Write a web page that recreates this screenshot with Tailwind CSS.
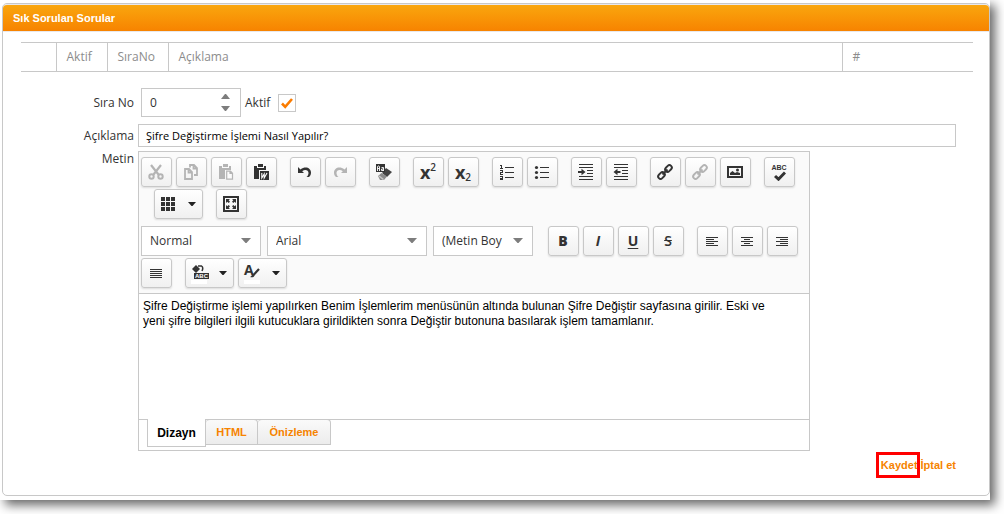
<!DOCTYPE html>
<html lang="tr">
<head>
<meta charset="utf-8">
<title>Sık Sorulan Sorular</title>
<script src="https://cdn.jsdelivr.net/npm/@tailwindcss/browser@4"></script>
</head>
<body class="min-h-screen bg-white pr-[14px] pb-[14px] font-['Open_Sans','Noto_Sans',sans-serif] text-xs text-[#333]">
<main class="bg-white pt-[3px] pb-1 pl-0.5 shadow-[5px_5px_10px_rgba(0,0,0,0.6)]">
<section class="rounded-[5px] border border-[#c8c8c8]">
  <h1 class="flex h-7 items-center rounded-t border-y border-[#e8e8ec] bg-linear-to-b from-[#f9a60e] to-[#f78300] px-[10px] font-['Liberation_Sans',sans-serif] text-[11px] font-bold text-white">Sık Sorulan Sorular</h1>

  <div class="px-[18px] pt-[10px] pr-4 pb-[22px]">
    <table class="w-full table-fixed border-y border-[#c8c8c8] text-left text-[#8c8c8c]">
      <colgroup><col class="w-[35px]"><col class="w-[51px]"><col class="w-[61px]"><col><col class="w-[131px]"></colgroup>
      <thead><tr class="h-[29px]">
        <td></td>
        <th class="border-l border-[#c8c8c8] pl-[10px] font-normal">Aktif</th>
        <th class="border-l border-[#c8c8c8] pl-[10px] font-normal">SıraNo</th>
        <th class="border-l border-[#c8c8c8] pl-[10px] font-normal">Açıklama</th>
        <th class="border-l border-[#c8c8c8] pl-[10px] font-normal">#</th>
      </tr></thead>
    </table>

    <form class="mt-4 mr-[17px] grid grid-cols-[113px_minmax(0,1fr)] gap-x-1">
      <label for="order" class="self-center text-right">Sıra No</label>
      <div class="flex items-center gap-1 pl-[3px]">
        <div class="flex h-[29px] w-[100px] items-center border border-[#c8c8c8] pr-[9px]">
          <input id="order" type="text" inputmode="numeric" value="0" class="w-full min-w-0 flex-1 pl-2 outline-none">
          <div class="flex flex-col gap-[7px]">
            <button type="button" aria-label="Artır" class="block"><svg class="h-[5px] w-[11px]" viewBox="0 0 11 5"><path d="M5 0h1l4 5H1z" fill="#7d7d7d"/></svg></button>
            <button type="button" aria-label="Azalt" class="block"><svg class="h-[5px] w-[11px]" viewBox="0 0 11 5"><path d="M1 0h9L6 5H5z" fill="#7d7d7d"/></svg></button>
          </div>
        </div>
        <label for="active">Aktif</label>
        <div class="relative ml-1 size-[18px]">
          <input id="active" type="checkbox" checked class="peer block size-[18px] appearance-none border border-[#c8c8c8] bg-white">
          <svg class="pointer-events-none absolute inset-0 hidden size-[18px] peer-checked:block" viewBox="0 0 18 18"><path d="M4 9.5l3.2 3.300L14 5" fill="none" stroke="#fb7c00" stroke-width="2.600"/></svg>
        </div>
      </div>

      <label for="title" class="mt-[7px] self-center text-right">Açıklama</label>
      <input id="title" type="text" value="Şifre Değiştirme İşlemi Nasıl Yapılır?" class="mt-[7px] h-[23px] w-full border border-[#c8c8c8] px-[7px] text-[11px] text-black outline-none">

      <span id="text-label" class="mt-1 text-right">Metin</span>
      <div class="mt-1 w-[672px] max-w-full border border-[#c8c8c8]" aria-labelledby="text-label" role="group">
        <div class="flex flex-col border-b border-[#c8c8c8] bg-[#fafafa] px-0.5 pt-[5px] pb-[5px] text-[#333] [&_button]:flex [&_button]:h-[30px] [&_button]:items-center [&_button]:justify-center [&_button]:rounded-[3px] [&_button]:border [&_button]:border-[#c8c8c8] [&_button]:bg-linear-to-b [&_button]:from-white [&_button]:to-[#f0f0f0] [&_button]:pr-px [&_button]:shadow-[0_1px_2px_rgba(0,0,0,0.12)] [&_svg]:shrink-0">
          <div class="flex gap-[13px]">
            <div class="flex gap-1">
              <button type="button" disabled aria-label="Kes" class="w-[31px] text-[#b4b4b4]"><svg class="size-4" viewBox="0 0 16 16" fill="none" stroke="currentColor"><path d="M3 1l7.500 9.500M13 1L5.500 10.500" stroke-width="2.200"/><circle cx="3.500" cy="12.500" r="2.200" stroke-width="2"/><circle cx="12.500" cy="12.500" r="2.200" stroke-width="2"/></svg></button>
              <button type="button" disabled aria-label="Kopyala" class="w-[31px] text-[#b4b4b4]"><svg class="size-4" viewBox="0 0 16 16" fill="none" stroke="currentColor" stroke-width="1.800"><path d="M2 5h4l3 3v7H2zM5.500 5v3.500H9M7 3.500V1h4l3 3v7h-3M10.500 1v3.500H14"/></svg></button>
              <button type="button" disabled aria-label="Yapıştır" class="w-[31px] text-[#b4b4b4]"><svg class="size-4" viewBox="0 0 16 16"><path d="M1 2h3v2h7V2h2v4H7v9H1z" fill="currentColor"/><path d="M5 0h5v3H5z" fill="currentColor"/><path d="M8.700 7.200h3.800l2 2v6H8.700zM12 7.500v2h2.500" fill="#fafafa" stroke="currentColor" stroke-width="1.200"/></svg></button>
              <button type="button" aria-label="Word'den yapıştır" class="w-[31px]"><svg class="size-4" viewBox="0 0 16 16"><path d="M1 2h3v2h7V2h2v4H6v9H1z" fill="currentColor"/><path d="M5 0h5v3H5z" fill="currentColor"/><path d="M7 7h9v9H7z" fill="currentColor"/><path d="M8.800 9v5l2.400-4v4L14 9" fill="none" stroke="#fff" stroke-width="1.100"/></svg></button>
            </div>
            <div class="flex gap-1">
              <button type="button" aria-label="Geri al" class="w-[31px]"><svg class="size-4" viewBox="0 0 16 16"><path d="M1 3v6h6L5.200 7.200C8 4.800 11.500 6 11.500 9c0 1.500-.7 3-2 4h2.500c1.500-1.200 2-2.800 2-4.500C14 4 8.500 1.500 3.500 5.400z" fill="currentColor"/></svg></button>
              <button type="button" disabled aria-label="Yinele" class="w-[31px] text-[#b4b4b4]"><svg class="size-4" viewBox="0 0 16 16"><path d="M15 3v6H9l1.800-1.800C8 4.800 4.500 6 4.500 9c0 1.500.7 3 2 4H4C2.500 11.800 2 10.200 2 8.500 2 4 7.500 1.500 12.500 5.400z" fill="currentColor"/></svg></button>
            </div>
            <button type="button" aria-label="Biçimi temizle" class="w-[31px]"><svg class="size-4" viewBox="0 0 16 16"><path d="M10 4l6 4-5 5-5-4z" fill="#444"/><path d="M5.500 9l5.500 3.500L8 16H4l-2-4z" fill="#8b8b8b"/><path d="M3 12l4.500 3.500" stroke="#c9c9c9" stroke-width="1.500"/><path d="M0 0h9v8H0z" fill="#333"/><path d="M1.500 7V2.500L2 2h1l.5.500V7M1.500 4.500h2M7.500 7V3.500h-2M7.500 6.500h-2V5h2" fill="none" stroke="#fff" stroke-width=".9"/></svg></button>
            <div class="flex gap-1">
              <button type="button" aria-label="Üst simge" class="w-[31px]"><span class="text-lg leading-none font-bold">x</span><span class="mb-2.5 text-[10px] leading-none font-semibold">2</span></button>
              <button type="button" aria-label="Alt simge" class="w-[31px]"><span class="text-lg leading-none font-bold">x</span><span class="mt-2.5 text-[10px] leading-none font-semibold">2</span></button>
            </div>
            <div class="flex gap-1">
              <button type="button" aria-label="Numaralı liste" class="w-[31px]"><svg class="size-4" viewBox="0 0 16 16" fill="none" stroke="currentColor" shape-rendering="crispEdges"><path d="M6 3.500h9M6 8.500h9M6 13.500h9"/><path d="M1 1.500h1.500v3M1 4.500h3M1 6.500h2.500v2H1.500v2H4M1 12.500h2.500v3H1M1 14h2"/></svg></button>
              <button type="button" aria-label="Madde listesi" class="w-[31px]"><svg class="size-4" viewBox="0 0 16 16" stroke="currentColor" fill="currentColor"><path d="M6 3.500h9M6 8.500h9M6 13.500h9" shape-rendering="crispEdges"/><g stroke="none"><circle cx="2.500" cy="3.500" r="1.600"/><circle cx="2.500" cy="8.500" r="1.600"/><circle cx="2.500" cy="13.500" r="1.600"/></g></svg></button>
            </div>
            <div class="flex gap-1">
              <button type="button" aria-label="Girintiyi artır" class="w-[31px]"><svg class="size-4" viewBox="0 0 16 16"><path d="M1 0h14v1H1zM1 3h14v1H1zM9 6h6v1H9zM9 9h6v1H9zM1 12h14v1H1zM1 15h14v1H1z" fill="currentColor" shape-rendering="crispEdges"/><path d="M0 7h3.500V4.800L7.500 8l-4 3.200V9H0z" fill="currentColor"/></svg></button>
              <button type="button" aria-label="Girintiyi azalt" class="w-[31px]"><svg class="size-4" viewBox="0 0 16 16"><path d="M1 0h14v1H1zM1 3h14v1H1zM9 6h6v1H9zM9 9h6v1H9zM1 12h14v1H1zM1 15h14v1H1z" fill="currentColor" shape-rendering="crispEdges"/><path d="M7.500 7H4.500V4.800L.5 8l4 3.200V9h3z" fill="currentColor"/></svg></button>
            </div>
            <div class="flex gap-1">
              <button type="button" aria-label="Bağlantı ekle" class="w-[31px]"><svg class="size-4" viewBox="0 0 16 16" fill="none" stroke="currentColor" stroke-width="1.900"><rect x="-3.700" y="-2.400" width="7.400" height="4.800" rx="2.400" transform="translate(11.500 4.500) rotate(-45)"/><rect x="-3.700" y="-2.400" width="7.400" height="4.800" rx="2.400" transform="translate(4.500 11.500) rotate(-45)"/><path d="M5.500 10.500l5-5"/></svg></button>
              <button type="button" disabled aria-label="Bağlantıyı kaldır" class="w-[31px] text-[#b4b4b4]"><svg class="size-4" viewBox="0 0 16 16" fill="none" stroke="currentColor" stroke-width="1.900"><rect x="-3.700" y="-2.400" width="7.400" height="4.800" rx="2.400" transform="translate(11.500 4.500) rotate(-45)"/><rect x="-3.700" y="-2.400" width="7.400" height="4.800" rx="2.400" transform="translate(4.500 11.500) rotate(-45)"/><path d="M5.500 10.500l5-5"/></svg></button>
              <button type="button" aria-label="Resim ekle" class="w-[31px]"><svg class="size-4" viewBox="0 0 16 16"><path d="M1 3h14v10H1z" fill="none" stroke="currentColor" stroke-width="2"/><path d="M3 11V9l2.500-2L8 9l2-1 3 1v2z" fill="currentColor"/><circle cx="10.500" cy="6" r="1.500" fill="currentColor"/></svg></button>
            </div>
            <button type="button" aria-label="Yazım denetimi" class="w-[31px]"><span class="flex flex-col"><span class="font-['Liberation_Sans',sans-serif] text-[7px] leading-[7px] font-bold">ABC</span><svg class="ml-[3px] h-[10px] w-3" viewBox="0 0 12 10"><path d="M1 5l3.500 3.200L11 1.500" fill="none" stroke="currentColor" stroke-width="3"/></svg></span></button>
          </div>

          <div class="mt-0.5 flex gap-[13px] pl-[13px]">
            <button type="button" aria-label="Tablo ekle" class="w-[49px] gap-[13px]"><svg class="size-[14px]" viewBox="0 0 14 14" shape-rendering="crispEdges"><path d="M0 0h4v4H0zM5 0h4v4H5zM10 0h4v4h-4zM0 5h4v4H0zM5 5h4v4H5zM10 5h4v4h-4zM0 10h4v4H0zM5 10h4v4H5zM10 10h4v4h-4z" fill="currentColor"/></svg><svg class="h-1 w-2" viewBox="0 0 8 4"><path d="M0 0h8L4.500 4h-1z" fill="#222"/></svg></button>
            <button type="button" aria-label="Tam ekran" class="w-[31px]"><svg class="size-4" viewBox="0 0 16 16"><path d="M1 1h14v14H1z" fill="none" stroke="currentColor" stroke-width="2"/><path d="M3 3h4L5.700 4.300 7 5.700 5.700 7 4.300 5.700 3 7zM13 3v4l-1.300-1.300L10.300 7 9 5.700l1.300-1.400L9 3zM3 13V9l1.300 1.300L5.700 9 7 10.300l-1.300 1.400L7 13zM13 13H9l1.300-1.300L9 10.300 10.300 9l1.400 1.300L13 9z" fill="currentColor"/></svg></button>
          </div>

          <div class="mt-[7px] flex">
            <div class="relative h-[30px] w-[120px]"><select aria-label="Paragraf stili" class="size-full appearance-none border border-[#c8c8c8] bg-white pl-2"><option>Normal</option></select><svg class="pointer-events-none absolute top-3 right-[10px] h-[5px] w-[10px]" viewBox="0 0 10 5"><path d="M0 0h10L5.500 5h-1z" fill="#7d7d7d"/></svg></div>
            <div class="relative ml-1.5 h-[30px] w-[160px]"><select aria-label="Yazı tipi" class="size-full appearance-none border border-[#c8c8c8] bg-white pl-2"><option>Arial</option></select><svg class="pointer-events-none absolute top-3 right-[10px] h-[5px] w-[10px]" viewBox="0 0 10 5"><path d="M0 0h10L5.500 5h-1z" fill="#7d7d7d"/></svg></div>
            <div class="relative ml-1.5 h-[30px] w-[100px]"><select aria-label="Metin boyutu" class="size-full appearance-none border border-[#c8c8c8] bg-white pl-2"><option>(Metin Boy</option></select><svg class="pointer-events-none absolute top-3 right-[10px] h-[5px] w-[10px]" viewBox="0 0 10 5"><path d="M0 0h10L5.500 5h-1z" fill="#7d7d7d"/></svg></div>
            <div class="ml-[15px] flex gap-1 text-sm">
              <button type="button" aria-label="Kalın" class="w-[31px] font-extrabold">B</button>
              <button type="button" aria-label="İtalik" class="w-[31px] font-bold italic">I</button>
              <button type="button" aria-label="Altı çizili" class="w-[31px] font-bold underline underline-offset-2">U</button>
              <button type="button" aria-label="Üstü çizili" class="w-[31px] font-semibold line-through">S</button>
            </div>
            <div class="ml-[13px] flex gap-1">
              <button type="button" aria-label="Sola hizala" class="w-[31px]"><svg class="size-3" viewBox="0 0 12 12" shape-rendering="crispEdges"><path d="M0 2h12v1H0zM0 4h8v1H0zM0 6h12v1H0zM0 8h8v1H0zM0 10h12v1H0z" fill="currentColor"/></svg></button>
              <button type="button" aria-label="Ortala" class="w-[31px]"><svg class="size-3" viewBox="0 0 12 12" shape-rendering="crispEdges"><path d="M0 2h12v1H0zM3 4h6v1H3zM0 6h12v1H0zM3 8h6v1H3zM0 10h12v1H0z" fill="currentColor"/></svg></button>
              <button type="button" aria-label="Sağa hizala" class="w-[31px]"><svg class="size-3" viewBox="0 0 12 12" shape-rendering="crispEdges"><path d="M0 2h12v1H0zM4 4h8v1H4zM0 6h12v1H0zM4 8h8v1H4zM0 10h12v1H0z" fill="currentColor"/></svg></button>
            </div>
          </div>

          <div class="mt-0.5 flex gap-[13px]">
            <button type="button" aria-label="İki yana yasla" class="w-[31px]"><svg class="size-3" viewBox="0 0 12 12" shape-rendering="crispEdges"><path d="M0 2h12v1H0zM0 4h12v1H0zM0 6h12v1H0zM0 8h12v1H0zM0 10h12v1H0z" fill="currentColor"/></svg></button>
            <div class="flex gap-1">
              <button type="button" aria-label="Arka plan rengi" class="w-[49px] gap-3"><span class="relative size-4"><svg class="h-2 w-4" viewBox="0 0 16 8"><path d="M5 0l4 4-4 4-4-4z" fill="currentColor"/><path d="M7 1h3.500c1.500 1 1.500 3 .5 5" fill="none" stroke="currentColor" stroke-width="1.500"/></svg><span class="absolute top-2 left-[3px] bg-[#333] px-px font-['Liberation_Sans',sans-serif] text-[6px] leading-[6px] font-bold text-white">ABC</span><span class="absolute top-[15px] left-0 h-1 w-4 bg-white"></span></span><svg class="h-1 w-2" viewBox="0 0 8 4"><path d="M0 0h8L4.500 4h-1z" fill="#222"/></svg></button>
              <button type="button" aria-label="Yazı rengi" class="w-[49px] gap-3"><span class="relative size-4"><span class="absolute -top-0.5 left-0 text-sm leading-none font-bold">A</span><svg class="absolute top-0 left-0 size-4" viewBox="0 0 16 16"><path d="M15 4L9 10.500" stroke="currentColor" stroke-width="2.200"/><path d="M9.500 9.500c-2 0-2 2-3.500 2.500 2 .8 4 .3 4.500-1.500z" fill="currentColor"/></svg><span class="absolute top-[15px] left-0 h-1 w-4 bg-white"></span></span><svg class="h-1 w-2" viewBox="0 0 8 4"><path d="M0 0h8L4.500 4h-1z" fill="#222"/></svg></button>
            </div>
          </div>
        </div>

        <textarea aria-labelledby="text-label" class="block h-[125px] w-full resize-none py-[5px] pr-5 pl-1 font-['Liberation_Sans',sans-serif] text-xs leading-[15px] text-black outline-none">Şifre Değiştirme işlemi yapılırken Benim İşlemlerim menüsünün altında bulunan Şifre Değiştir sayfasına girilir. Eski ve yeni şifre bilgileri ilgili kutucuklara girildikten sonra Değiştir butonuna basılarak işlem tamamlanır.</textarea>

        <div class="flex h-[31px] items-start border-t border-[#c8c8c8] pl-2 font-['Liberation_Sans',sans-serif] text-[11px] font-bold text-[#f68300]">
          <button type="button" class="-mt-px h-[28px] w-[59px] border border-t-0 border-[#c8c8c8] bg-white text-xs text-black">Dizayn</button>
          <button type="button" class="-mt-px h-[26px] w-[52px] rounded-t border border-l-0 border-[#c8c8c8] bg-linear-to-b from-[#fafafa] to-[#ececec]">HTML</button>
          <button type="button" class="-mt-px h-[26px] w-[73px] rounded-t border border-l-0 border-[#c8c8c8] bg-linear-to-b from-[#fafafa] to-[#ececec]">Önizleme</button>
        </div>
      </div>

      <div class="col-span-2 mt-1.5 flex justify-end gap-[3px] font-['Liberation_Sans',sans-serif] text-[11px] leading-4 font-bold text-[#f68300]">
        <a href="#kaydet" class="relative">Kaydet<span class="pointer-events-none absolute -top-[5px] -right-0.5 -bottom-[5px] -left-[5px] border-[3px] border-[#f00]"></span></a>
        <a href="#iptal">İptal et</a>
      </div>
    </form>
  </div>
</section>
</main>
</body>
</html>
